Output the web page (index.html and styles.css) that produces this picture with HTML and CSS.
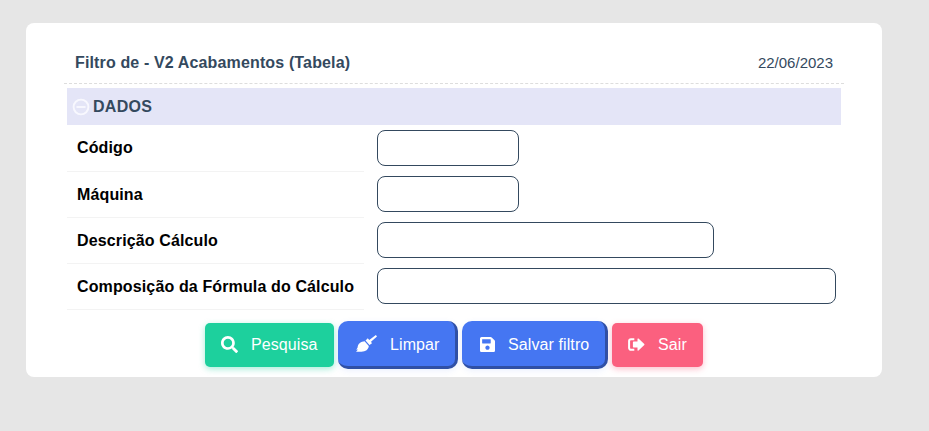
FILE: index.html
```html
<!DOCTYPE html>
<html lang="pt-BR">
<head>
  <meta charset="UTF-8">
  <meta name="viewport" content="width=device-width, initial-scale=1.0">
  <title>Filtro de - V2 Acabamentos (Tabela)</title>
  <link rel="stylesheet" href="styles.css">
</head>
<body>
  <form class="card">
    <div class="header">
      <span class="title">Filtro de - V2 Acabamentos (Tabela)</span>
      <span class="date">22/06/2023</span>
    </div>

    <div class="block">
      <div class="block-title">
        <svg class="collapse" viewBox="0 0 18 18">
          <circle cx="9" cy="9" r="7.4"/>
          <path d="M4.500 9h9"/>
        </svg>
        <span>DADOS</span>
      </div>

      <div class="row">
        <label for="codigo">Código</label>
        <input type="text" id="codigo" class="small">
      </div>
      <div class="row">
        <label for="maquina">Máquina</label>
        <input type="text" id="maquina" class="small">
      </div>
      <div class="row">
        <label for="descricao">Descrição Cálculo</label>
        <input type="text" id="descricao" class="medium">
      </div>
      <div class="row">
        <label for="formula">Composição da Fórmula do Cálculo</label>
        <input type="text" id="formula" class="large">
      </div>
    </div>

    <div class="toolbar">
      <button type="button" class="btn btn-search">
        <svg class="icon" viewBox="0 0 512 512"><path d="M505 442.700L405.300 343c-4.500-4.500-10.600-7-17-7H372c27.600-35.300 44-79.700 44-128C416 93.100 322.900 0 208 0S0 93.100 0 208s93.100 208 208 208c48.300 0 92.700-16.400 128-44v16.300c0 6.400 2.500 12.500 7 17l99.700 99.700c9.400 9.400 24.600 9.400 33.900 0l28.300-28.300c9.400-9.400 9.400-24.600.1-34zM208 336c-70.700 0-128-57.200-128-128 0-70.700 57.200-128 128-128 70.700 0 128 57.200 128 128 0 70.700-57.200 128-128 128z"/></svg>
        <span>Pesquisa</span>
      </button>
      <button type="button" class="btn btn-blue btn-clear">
        <svg class="icon broom" viewBox="0 0 21 17"><path d="M19.900 0L21 1.500 15 6.800 16 8.200 13.500 10.100 9.500 5.500 11.800 3.300 13.200 4.900z"/><path d="M8.600 6.300L12.800 11C12.600 14.500 9.500 16.700 5.500 16.700H0L2 14.600.3 14.800 1.600 12.500C2 8.500 5 6.500 8.600 6.300z"/></svg>
        <span>Limpar</span>
      </button>
      <button type="button" class="btn btn-blue btn-save">
        <svg class="icon save" viewBox="0 0 448 448"><path d="M433.900 97.900L350.100 14.100A48 48 0 0 0 316.100 0H48C21.500 0 0 21.500 0 48v352c0 26.500 21.500 48 48 48h352c26.500 0 48-21.500 48-48V131.900a48 48 0 0 0-14.100-34zM224 384c-35.300 0-64-28.700-64-64s28.700-64 64-64 64 28.700 64 64-28.700 64-64 64zm96-304.500V180c0 6.600-5.400 12-12 12H76c-6.600 0-12-5.400-12-12V76c0-6.600 5.400-12 12-12h228.500c3.200 0 6.200 1.300 8.500 3.500l3.500 3.500c2.300 2.200 3.500 5.300 3.500 8.500z"/></svg>
        <span>Salvar filtro</span>
      </button>
      <button type="button" class="btn btn-exit">
        <svg class="icon exit" viewBox="0 0 17 13"><path class="door" d="M6.300 1.200H3A1.900 1.900 0 0 0 1.100 3.100V9.900A1.900 1.900 0 0 0 3 11.800H6.300"/><path d="M10.500 .6L16.300 6.100Q16.700 6.500 16.300 6.900L10.500 12.400Q9.500 13 9.500 12V9.400H5.600Q4.900 9.400 4.900 8.700V4.300Q4.900 3.600 5.600 3.600H9.500V1Q9.500 0 10.500 .6z"/></svg>
        <span>Sair</span>
      </button>
    </div>
  </form>
</body>
</html>
```

FILE: styles.css
```css
* {
  box-sizing: border-box;
}

body {
  margin: 0;
  padding: 23px 47px 0 26px;
  background-color: #e6e6e6;
  font-family: "Liberation Sans", Arial, sans-serif;
  font-size: 16px;
}

.card {
  height: 354px;
  padding: 18px 38px 0;
  background: #fff;
  border-radius: 8px;
}

.header {
  display: flex;
  justify-content: space-between;
  align-items: center;
  height: 43px;
  padding: 0 11px;
  border-bottom: 1px dashed #ddd;
  color: #34495e;
}

.title {
  padding-top: 2px;
  font-weight: bold;
  letter-spacing: 0.14px;
}

.date {
  font-size: 15px;
}

.block {
  margin: 4px 3px 0;
}

.block-title {
  display: flex;
  align-items: center;
  gap: 3px;
  height: 37px;
  margin-bottom: 1px;
  padding-left: 5px;
  background: #e4e5f7;
  color: #34495e;
  font-weight: bold;
  letter-spacing: 0.3px;
}

.collapse {
  width: 18px;
  height: 18px;
  fill: none;
  stroke: #f8f8fe;
  stroke-width: 1.9;
}

.row {
  display: flex;
  align-items: center;
  gap: 13px;
  height: 46px;
}

.row label {
  width: 297px;
  height: 46px;
  padding-left: 10px;
  border-bottom: 1px solid #f3f3f3;
  line-height: 45px;
  font-weight: bold;
  letter-spacing: 0.13px;
  color: #000;
}

.block-title + .row label {
  line-height: 43px;
}

.row input {
  height: 36px;
  margin-bottom: 2px;
  padding: 0 10px;
  border: 1px solid #34495e;
  border-radius: 8px;
  background: #fff;
}

.small {
  width: 142px;
}

.medium {
  width: 337px;
}

.large {
  width: 459px;
}

.toolbar {
  display: flex;
  justify-content: center;
  align-items: center;
  gap: 4px;
  margin-top: 11px;
}

.btn {
  display: flex;
  align-items: center;
  height: 44px;
  padding: 0 16px;
  border: none;
  border-radius: 5px;
  color: #fff;
  font-family: inherit;
  font-size: 16px;
  letter-spacing: 0.1px;
  white-space: nowrap;
  cursor: pointer;
}

.icon {
  width: 17px;
  height: 17px;
  margin-right: 13px;
  margin-bottom: 2px;
  fill: #fff;
}

.btn-search {
  width: 129px;
  background: #1dd09d;
  box-shadow: 0 2px 6px rgba(29, 208, 157, 0.4);
}

.btn-blue {
  height: 48px;
  border-right: 3px solid #3050a5;
  border-bottom: 3px solid #3050a5;
  border-radius: 10px;
  background: #4576f2;
  box-shadow: 0 2px 6px rgba(69, 118, 242, 0.1);
}

.btn-clear {
  width: 120px;
  padding: 2px 0 0 18px;
}

.broom {
  width: 21px;
}

.btn-save {
  width: 146px;
  padding: 2px 0 0 18px;
}

.save {
  width: 15px;
  height: 15px;
  margin-bottom: 0;
}

.btn-exit {
  width: 91px;
  background: #fb607f;
  box-shadow: 0 2px 6px rgba(251, 96, 127, 0.4);
}

.exit {
  height: 13px;
}

.door {
  fill: none;
  stroke: #fff;
  stroke-width: 2;
}
```
